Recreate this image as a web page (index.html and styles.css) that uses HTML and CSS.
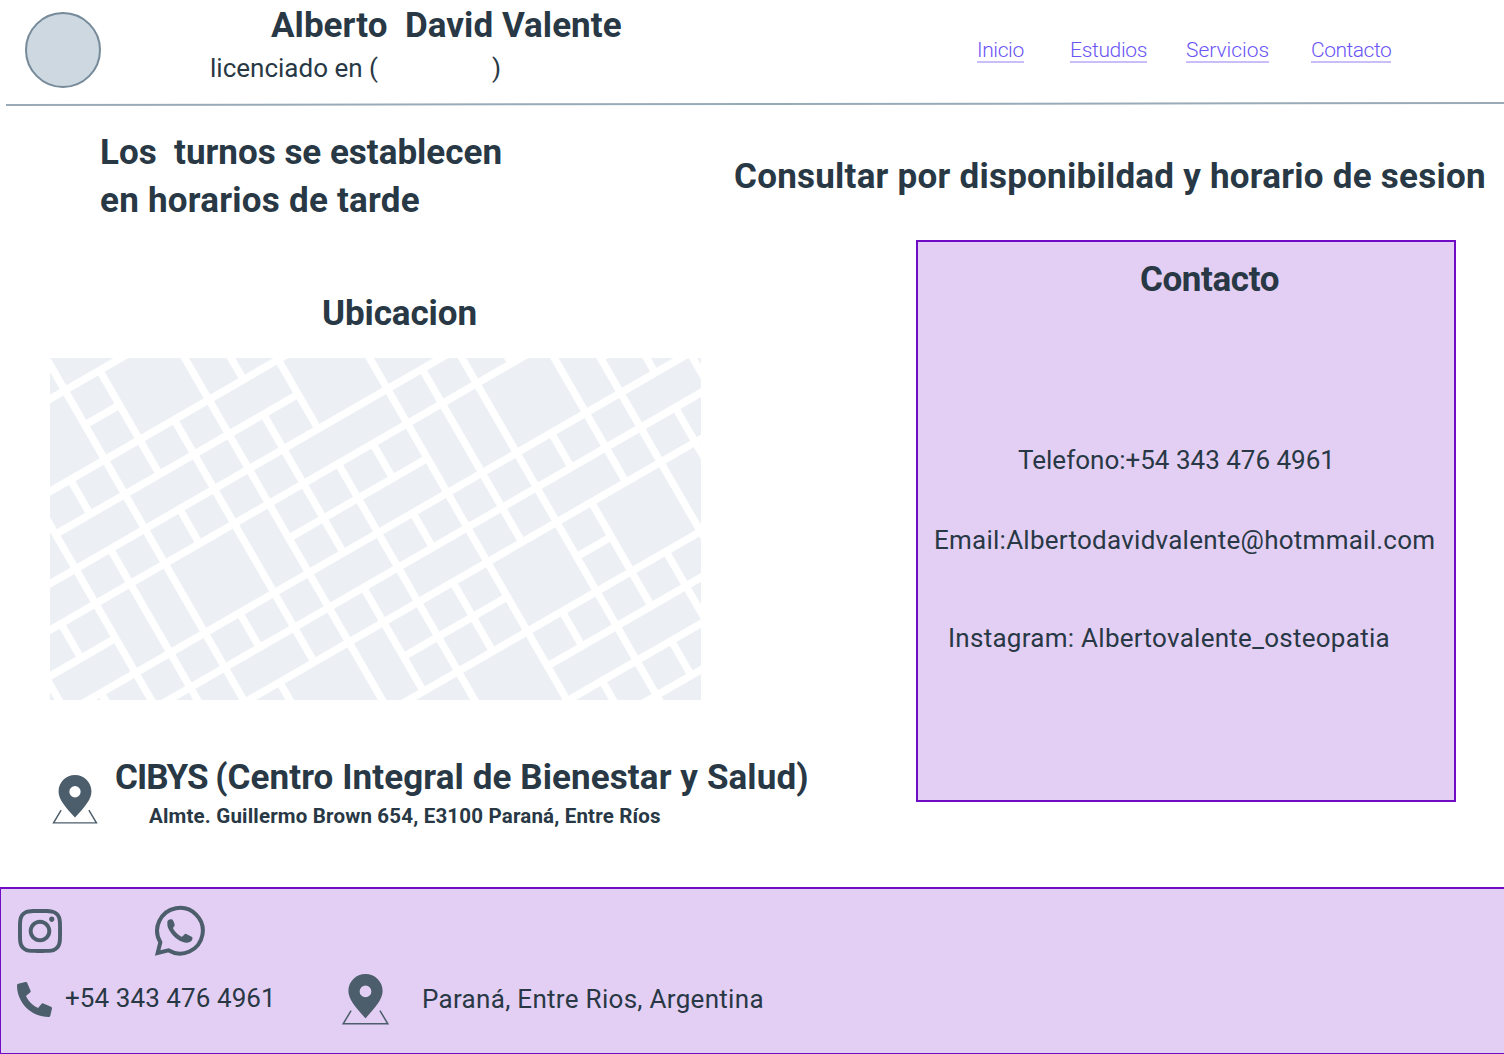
FILE: index.html
```html
<!DOCTYPE html>
<html lang="es">
<head>
<meta charset="utf-8">
<title>Alberto David Valente - Contacto</title>
<link rel="stylesheet" href="styles.css">
</head>
<body>
<svg class="sprite" width="0" height="0">
  <symbol id="pin" viewBox="0 0 140 152">
    <path fill="currentColor" fill-rule="evenodd" d="M70 0C98 0 121 22 121 51C121 75 100 100 70 132C40 100 19 75 19 51C19 22 42 0 70 0ZM70 34.500A17.500 17.500 0 1 0 70 69.500A17.500 17.500 0 1 0 70 34.500Z"/>
    <path fill="none" stroke="currentColor" stroke-width="4.500" d="M27 109L3.500 148.500H136.500L113 109"/>
  </symbol>
</svg>

<header class="header">
  <div class="avatar"></div>
  <div class="brand">
    <h1 class="heading name">Alberto  David Valente</h1>
    <p class="text role">licenciado en (<span class="blank"></span>)</p>
  </div>
  <nav class="nav">
    <a class="n1" href="#">Inicio</a>
    <a class="n2" href="#">Estudios</a>
    <a class="n3" href="#">Servicios</a>
    <a class="n4" href="#">Contacto</a>
  </nav>
</header>
<svg class="rule" width="1504" height="6" viewBox="0 0 1504 6"><path d="M6 4L1504 2" stroke="#9aabb8" stroke-width="2"/></svg>

<main class="main">
  <section class="left">
    <h2 class="heading turnos"><span class="t1">Los  turnos se establecen</span>
<span class="t2">en horarios de tarde</span></h2>
    <h2 class="heading ubicacion">Ubicacion</h2>
    <svg class="map" width="651" height="342" viewBox="0 0 651 342">
      <g transform="rotate(-30) translate(-3.3 35.5) scale(40)" fill="none" stroke="#fff" stroke-width=".185">
        <path d="M-5 0H3M0 1H1M-5 2H6M-2 3H5M-5 4H9M-5 5H12M-5 6H-2M3 6H7M12 6H14M-5 7H16M-4 8H16M-3 9H16M4 10H7M9 10H10M2 11H15M7 12H14M6 13H14M7 14H14"/>
        <path d="M-4 6V9M-3 5V6M-3 7V9M-2 1V9M-1 2V3M-1 4V5M-1 5V10M0 -2V10M1 0V3M1 4V5M1 7V8M1 9V12M2 2V9M3 -1V13M4 -1V2M4 3V7M4 8V11M5 2V4M5 5V14M6 5V6M6 7V8M6 9V11M7 2V14M8 4V9M8 11V12M8 13V15M9 3V16M10 4V5M10 7V8M10 9V12M10 13V14M11 4V9M11 11V13M12 4V13M13 5V7M13 8V11M14 5V8"/>
      </g>
    </svg>
    <div class="place">
      <svg class="place-pin" width="46" height="49"><use href="#pin"/></svg>
      <div class="place-info">
        <h2 class="heading cibys"><span class="sigla">CIBYS </span>(Centro Integral de Bienestar y Salud)</h2>
        <p class="address">Almte. Guillermo Brown 654, E3100 Paraná, Entre Ríos</p>
      </div>
    </div>
  </section>
  <section class="right">
    <h2 class="heading consultar">Consultar por disponibildad y horario de sesion</h2>
    <div class="card">
      <h2 class="heading contacto">Contacto</h2>
      <p class="text tel">Telefono:+54 343 476 4961</p>
      <p class="text mail">Email:Albertodavidvalente@hotmmail.com</p>
      <p class="text insta">Instagram: Albertovalente_osteopatia</p>
    </div>
  </section>
</main>

<footer class="footer">
  <div class="social">
    <svg width="44" height="44" viewBox="0 32 448 448"><path fill="currentColor" d="M224.1 141c-63.6 0-114.9 51.3-114.9 114.9s51.3 114.9 114.9 114.9S339 319.5 339 255.9 287.7 141 224.1 141zm0 189.6c-41.1 0-74.7-33.5-74.7-74.7s33.5-74.7 74.7-74.7 74.7 33.5 74.7 74.7-33.6 74.7-74.7 74.7zm146.4-194.3c0 14.9-12 26.8-26.8 26.8-14.9 0-26.8-12-26.8-26.8s12-26.8 26.8-26.8 26.8 12 26.8 26.8zm76.1 27.2c-1.7-35.9-9.9-67.7-36.2-93.9-26.2-26.2-58-34.4-93.9-36.2-37-2.1-147.9-2.1-184.9 0-35.8 1.700-67.6 9.900-93.9 36.1s-34.4 58-36.2 93.9c-2.1 37-2.1 147.9 0 184.9 1.700 35.9 9.900 67.7 36.2 93.9s58 34.4 93.9 36.2c37 2.100 147.9 2.100 184.9 0 35.9-1.700 67.7-9.900 93.9-36.2 26.2-26.2 34.4-58 36.2-93.9 2.100-37 2.100-147.8 0-184.8zM398.8 388c-7.800 19.6-22.9 34.7-42.6 42.6-29.5 11.7-99.5 9-132.1 9s-102.7 2.600-132.1-9c-19.6-7.800-34.7-22.9-42.6-42.6-11.7-29.5-9-99.5-9-132.1s-2.600-102.7 9-132.1c7.800-19.6 22.9-34.7 42.6-42.6 29.5-11.7 99.5-9 132.1-9s102.7-2.600 132.1 9c19.6 7.800 34.7 22.9 42.6 42.6 11.7 29.5 9 99.5 9 132.1s2.700 102.7-9 132.1z"/></svg>
    <svg class="whatsapp" width="54" height="54" viewBox="0 0 162 162"><path fill="none" stroke="currentColor" stroke-width="12" d="M22 115A68.500 68.500 0 1 1 46 139L14 147Z"/><path fill="currentColor" d="M43 55C43 48 50 45 56 46C60 46 64 58 65 62C66 66 60 70 60 73C65 83 75 93 85 98C90 99 94 88 98 89L116 98C121 101 118 110 112 113C104 118 96 116 90 114C68 106 50 86 44 68C43 63 43 60 43 55Z"/></svg>
  </div>
  <div class="details">
    <svg class="phone" width="35" height="35" viewBox="0 0 512 512"><path fill="currentColor" d="M497.39 361.8l-112-48a24 24 0 0 0-28 6.900l-49.6 60.6A370.66 370.66 0 0 1 130.6 204.11l60.6-49.6a23.94 23.94 0 0 0 6.900-28l-48-112A24.160 24.160 0 0 0 122.6.61l-104 24A24 24 0 0 0 0 48c0 256.5 207.9 464 464 464a24 24 0 0 0 23.4-18.6l24-104a24.290 24.290 0 0 0-14.010-27.6z"/></svg>
    <span class="text fono">+54 343 476 4961</span>
    <svg class="foot-pin" width="47" height="51"><use href="#pin"/></svg>
    <span class="text ciudad">Paraná, Entre Rios, Argentina</span>
  </div>
</footer>
</body>
</html>
```
FILE: styles.css
```css
* { box-sizing: border-box; }
body {
  margin: 0;
  width: 1504px;
  height: 1054px;
  overflow: hidden;
  background: #fff;
  color: #283845;
  font-family: Roboto, "Liberation Sans", sans-serif;
}
.sprite { position: absolute; }
h1, h2, p { margin: 0; }
svg { display: block; flex: none; color: #4c5e6b; }
.heading { font-size: 35px; line-height: 48px; font-weight: 700; white-space: pre; }
.text { font-size: 26px; line-height: 32px; white-space: pre; }

.header { display: flex; align-items: flex-start; height: 101px; padding-left: 25px; }
.avatar { width: 76px; height: 76px; margin-top: 12px; border: 2px solid #768a99; border-radius: 50%; background: #cdd8e1; }
.brand { width: 876px; padding: 2px 0 0 109px; }
.name { padding-left: 61px; letter-spacing: .05px; }
.role { margin-top: 2px; }
.blank { display: inline-block; width: 114px; }
.nav { display: flex; padding-top: 38px; }
.nav a { height: 25px; padding-top: 1px; border-bottom: 2px solid #c9bef9; color: #6a55f4; font-size: 21px; font-weight: 300; line-height: 23px; text-decoration: none; white-space: nowrap; }
.nav .n1 { width: 47px; margin-right: 46px; letter-spacing: -.4px; }
.nav .n2 { width: 77px; margin-right: 39px; letter-spacing: -.32px; }
.nav .n3 { width: 83px; margin-right: 42px; letter-spacing: -.03px; }
.nav .n4 { width: 80px; letter-spacing: -.48px; }

.main { display: flex; height: 780px; }
.left { width: 734px; padding: 22px 0 0 50px; }
.turnos { padding-left: 50px; }
.t2 { letter-spacing: .24px; }
.ubicacion { margin-top: 65px; padding-left: 272px; letter-spacing: -.1px; }
.map { margin-top: 20px; background: #ecf0f5; }
.place { display: flex; margin-top: 54px; }
.place-pin { margin: 21px 0 0 2px; }
.place-info { padding-left: 17px; }
.cibys { letter-spacing: .1px; }
.sigla { letter-spacing: -1px; }
.address { margin-top: 2px; padding-left: 34px; font-size: 20.500px; line-height: 24px; font-weight: 700; letter-spacing: .18px; white-space: nowrap; }

.right { width: 770px; padding-top: 46px; }
.consultar { letter-spacing: .24px; }
.card { width: 540px; height: 562px; margin: 39px 0 0 182px; padding-top: 14px; border: 2px solid #6f0cc4; background: #e3cff4; }
.contacto { padding-left: 222px; letter-spacing: -.4px; }
.tel { margin-top: 140px; padding-left: 100px; }
.mail { margin-top: 48px; padding-left: 16px; letter-spacing: .25px; }
.insta { margin-top: 66px; padding-left: 30px; letter-spacing: .27px; }

.footer { height: 167px; padding: 15px 0 0 17px; border: solid #6f0cc4; border-width: 2px 0 1px 1px; background: #e3cff4; }
.social { display: flex; align-items: center; height: 54px; }
.whatsapp { margin-left: 91px; }
.details { display: flex; margin-top: 15px; }
.phone { margin: 9px 0 0 -1px; }
.fono { width: 290px; padding-left: 13px; margin-top: 9px; letter-spacing: .08px; }
.foot-pin { margin-top: 1px; }
.ciudad { padding-left: 33px; margin-top: 10px; letter-spacing: .3px; }
```
